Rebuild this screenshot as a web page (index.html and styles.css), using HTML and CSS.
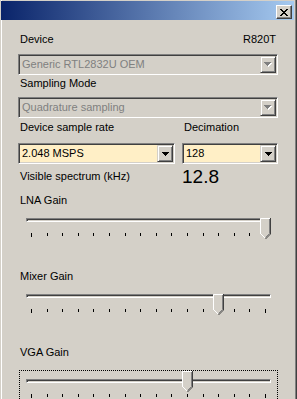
FILE: index.html
```html
<!DOCTYPE html>
<html lang="en">
<head>
  <meta charset="UTF-8">
  <meta name="viewport" content="width=device-width, initial-scale=1.0">
  <title>RTL-SDR Controller</title>
  <link rel="stylesheet" href="styles.css">
</head>

<body>
  <div class="window">
    <div class="titlebar">
      <button class="close" type="button" title="Close">
        <svg width="8" height="7" viewBox="0 0 8 7"><path d="M0 0h2v1H0z M6 0h2v1H6z M1 1h2v1H1z M5 1h2v1H5z M2 2h4v1H2z M3 3h2v1H3z M2 4h4v1H2z M1 5h2v1H1z M5 5h2v1H5z M0 6h2v1H0z M6 6h2v1H6z" fill="#000"/></svg>
      </button>
    </div>

    <div class="content">
      <div class="device-row"><span class="label">Device</span><span class="tuner">R820T</span></div>
      <div class="combo disabled first-combo">
        <span class="combo-text">Generic RTL2832U OEM</span>
        <span class="combo-btn"><svg width="8" height="5" viewBox="0 0 8 5"><path d="M1 1h7v1H1z M2 2h5v1H2z M3 3h3v1H3z M4 4h1v1H4z" fill="#fff"/><path d="M0 0h7v1H0z M1 1h5v1H1z M2 2h3v1H2z M3 3h1v1H3z" fill="#808080"/></svg></span>
      </div>

      <div class="label mode-label">Sampling Mode</div>
      <div class="combo disabled mode-combo">
        <span class="combo-text">Quadrature sampling</span>
        <span class="combo-btn"><svg width="8" height="5" viewBox="0 0 8 5"><path d="M1 1h7v1H1z M2 2h5v1H2z M3 3h3v1H3z M4 4h1v1H4z" fill="#fff"/><path d="M0 0h7v1H0z M1 1h5v1H1z M2 2h3v1H2z M3 3h1v1H3z" fill="#808080"/></svg></span>
      </div>

      <div class="pair rate-labels">
        <div class="label">Device sample rate</div>
        <div class="label">Decimation</div>
      </div>
      <div class="pair rate-combos">
        <div class="combo">
          <span class="combo-text">2.048 MSPS</span>
          <span class="combo-btn"><svg width="7" height="4" viewBox="0 0 7 4"><path d="M0 0h7v1H0z M1 1h5v1H1z M2 2h3v1H2z M3 3h1v1H3z" fill="#000"/></svg></span>
        </div>
        <div class="combo">
          <span class="combo-text">128</span>
          <span class="combo-btn"><svg width="7" height="4" viewBox="0 0 7 4"><path d="M0 0h7v1H0z M1 1h5v1H1z M2 2h3v1H2z M3 3h1v1H3z" fill="#000"/></svg></span>
        </div>
      </div>

      <div class="pair spectrum">
        <div class="label spectrum-label">Visible spectrum (kHz)</div>
        <div class="big">12.8</div>
      </div>

      <!-- gain sliders: 16 steps, thumb left = 6 + step/15 * 234 -->
      <div class="label gain-label first-gain">LNA Gain</div>
      <div class="trackbar">
        <div class="track"></div>
        <div class="thumb" style="left: 240px"><svg width="11" height="21" viewBox="0 0 11 21"><polygon points="0,0 11,0 11,16 5.5,21 0,16" fill="#d4d0c8"/><path d="M0.5 16V0.5H10" stroke="#fff" fill="none"/><path d="M0.5 15.5L5 20" stroke="#fff" fill="none"/><path d="M9.5 1V15.5L5.5 19.5" stroke="#808080" fill="none"/><path d="M10.5 0V16L5.5 21" stroke="#404040" fill="none"/></svg></div>
        <div class="ticks"><i></i><i></i><i></i><i></i><i></i><i></i><i></i><i></i><i></i><i></i><i></i><i></i><i></i><i></i><i></i><i></i></div>
      </div>

      <div class="label gain-label">Mixer Gain</div>
      <div class="trackbar">
        <div class="track"></div>
        <div class="thumb" style="left: 193px"><svg width="11" height="21" viewBox="0 0 11 21"><polygon points="0,0 11,0 11,16 5.5,21 0,16" fill="#d4d0c8"/><path d="M0.5 16V0.5H10" stroke="#fff" fill="none"/><path d="M0.5 15.5L5 20" stroke="#fff" fill="none"/><path d="M9.5 1V15.5L5.5 19.5" stroke="#808080" fill="none"/><path d="M10.5 0V16L5.5 21" stroke="#404040" fill="none"/></svg></div>
        <div class="ticks"><i></i><i></i><i></i><i></i><i></i><i></i><i></i><i></i><i></i><i></i><i></i><i></i><i></i><i></i><i></i><i></i></div>
      </div>

      <div class="label gain-label">VGA Gain</div>
      <div class="trackbar focused">
        <div class="track"></div>
        <div class="thumb" style="left: 162px"><svg width="11" height="21" viewBox="0 0 11 21"><polygon points="0,0 11,0 11,16 5.5,21 0,16" fill="#d4d0c8"/><path d="M0.5 16V0.5H10" stroke="#fff" fill="none"/><path d="M0.5 15.5L5 20" stroke="#fff" fill="none"/><path d="M9.5 1V15.5L5.5 19.5" stroke="#808080" fill="none"/><path d="M10.5 0V16L5.5 21" stroke="#404040" fill="none"/></svg></div>
        <div class="ticks"><i></i><i></i><i></i><i></i><i></i><i></i><i></i><i></i><i></i><i></i><i></i><i></i><i></i><i></i><i></i><i></i></div>
      </div>
    </div>
  </div>
</body>
</html>
```

FILE: styles.css
```css
body {
  margin: 0;
  background-color: #d4d0c8;
  font-family: "Liberation Sans", Arial, sans-serif;
  font-size: 11px;
  line-height: 13px;
  color: #000;
}

.window {
  width: 297px;
  height: 399px;
  box-sizing: border-box;
  border-right: 1px solid #404040; /* outer frame edge */
  border-left: 1px solid #d4d0c8;
  padding-top: 1px;
  box-shadow: inset -1px 0 #808080, inset 1px 0 #fff;
  overflow: hidden;
}

/* caption bar */
.titlebar {
  height: 19px;
  margin-right: 2px;
  background: linear-gradient(to right, #0a246a, #a6caf0);
  display: flex;
  justify-content: flex-end;
  align-items: flex-end;
}
.close {
  width: 16px;
  height: 14px;
  margin: 0 2px 1px 0;
  padding: 0;
  box-sizing: border-box;
  background-color: #d4d0c8;
  border: 1px solid;
  border-color: #fff #404040 #404040 #fff;
  box-shadow: inset -1px -1px #808080;
  display: flex;
  justify-content: center;
  align-items: center;
}

.content {
  padding: 0 18px 0 17px;
}

.label {
  padding-left: 2px;
}

.device-row {
  display: flex;
  justify-content: space-between;
  margin-top: 13px;
  padding-right: 2px;
}

/* combo boxes */
.combo {
  height: 21px;
  box-sizing: border-box;
  display: flex;
  align-items: stretch;
  background-color: #ffefc6;
  border: 1px solid;
  border-color: #808080 #fff #fff #808080;
  box-shadow: inset 1px 1px #404040, inset -1px -1px #d4d0c8;
  padding: 1px;
}
.combo.disabled {
  background-color: #d4d0c8;
  color: #808080;
}
.combo-text {
  flex: 1;
  padding-left: 2px;
  display: flex;
  align-items: center;
  white-space: nowrap;
  overflow: hidden;
}
.combo-btn {
  width: 16px;
  box-sizing: border-box;
  background-color: #d4d0c8;
  border: 1px solid;
  border-color: #d4d0c8 #404040 #404040 #d4d0c8;
  box-shadow: inset 1px 1px #fff, inset -1px -1px #808080;
  display: flex;
  justify-content: center;
  align-items: center;
}
.combo-btn svg {
  display: block;
}

.first-combo {
  margin-top: 8px;
}
.mode-label {
  margin-top: 2px;
}
.mode-combo {
  margin-top: 7px;
}

.pair {
  display: grid;
  grid-template-columns: 157px 96px;
  column-gap: 7px;
}
.rate-labels {
  margin-top: 3px;
}
.rate-combos {
  margin-top: 9px;
}
.spectrum {
  margin-top: 2px;
}
.spectrum-label {
  padding-top: 4px;
}
.big {
  font-size: 19px;
  line-height: 22px;
}

/* trackbars */
.gain-label {
  margin-top: 22px;
}
.first-gain {
  margin-top: 6px;
}
.trackbar {
  position: relative;
  margin: 11px 0 0 1px;
  height: 29px;
  border: 1px dotted transparent;
  border-top: 0;
}
.trackbar.focused {
  border: 1px dotted #000;
}
.track {
  height: 4px;
  box-sizing: border-box;
  margin: 8px 6px 0;
  border: 1px solid;
  border-color: #808080 #fff #fff #808080;
  box-shadow: inset 1px 1px #404040;
}
.thumb {
  position: absolute;
  top: 0;
  line-height: 0;
}
.ticks {
  display: flex;
  justify-content: space-between;
  align-items: flex-start;
  margin: 11px 11px 0;
}
.ticks i {
  width: 1px;
  height: 3px;
  background-color: #000;
}
.ticks i:first-child,
.ticks i:last-child {
  height: 4px;
}
```
